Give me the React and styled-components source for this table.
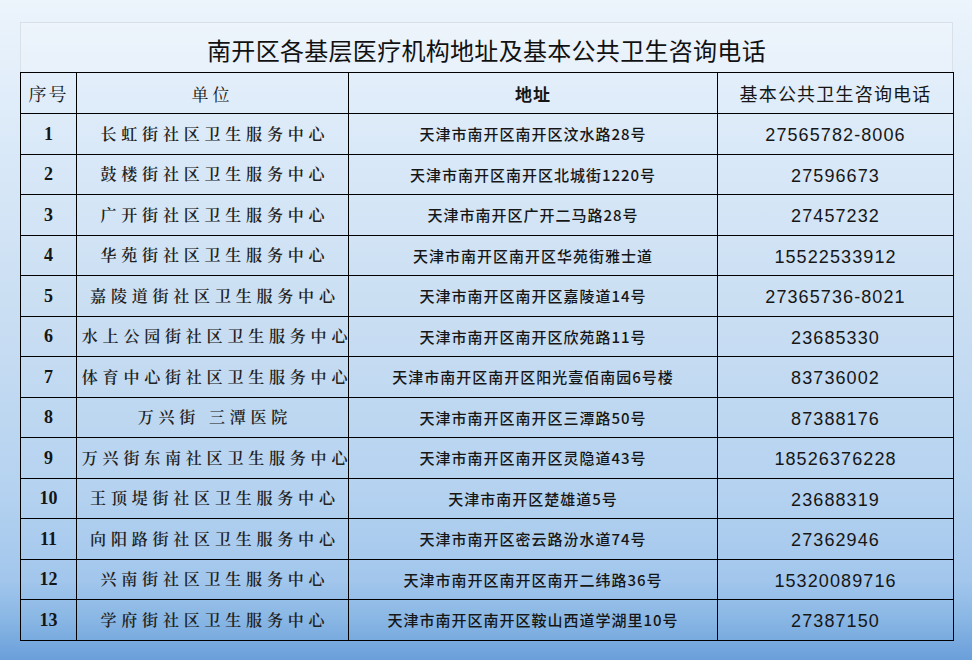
import React from "react";
import styled, { createGlobalStyle } from "styled-components";

const GlobalStyle = createGlobalStyle`
  html, body {
    margin: 0;
    padding: 0;
  }
  body {
    width: 972px;
    height: 660px;
    overflow: hidden;
    background: linear-gradient(
      to bottom,
      #ecf4fc 0%,
      #dae9f8 22%,
      #c8ddf2 50%,
      #b4d2f0 75%,
      #a2c6ec 88%,
      #88b6e4 94%,
      #6a9fda 100%
    );
    font-family: "Noto Sans CJK SC", "Liberation Sans", sans-serif;
    color: #111;
  }
`;

const Page = styled.div`
  box-sizing: border-box;
  width: 972px;
  height: 660px;
  padding: 22px 19px 0 20px;
`;

const TitleBox = styled.div`
  box-sizing: border-box;
  height: 50px;
  display: flex;
  align-items: center;
  justify-content: center;
  border: 1px solid #d9e0e8;
  border-bottom: none;
  background: rgba(255, 255, 255, 0.18);
  font-size: 24px;
  line-height: 1;
  font-weight: 400;
  letter-spacing: 0.3px;
  color: #111;
  padding-top: 4px;
`;

const Table = styled.table`
  width: 933px;
  border-collapse: collapse;
  table-layout: fixed;
`;

const HeadCell = styled.th`
  box-sizing: border-box;
  height: 41px;
  padding: 0;
  line-height: 1;
  border: 1px solid #000;
  font-weight: ${({ $weight }) => $weight || 400};
  font-family: ${({ $serif }) =>
    $serif
      ? `"Noto Serif CJK SC", "Noto Serif CJK", "Noto Sans CJK SC", serif`
      : `"Noto Sans CJK SC", sans-serif`};
  font-size: ${({ $size }) => $size || "17px"};
  letter-spacing: ${({ $spacing }) => $spacing || "1px"};
  color: #151515;
  text-align: center;
`;

const Cell = styled.td`
  box-sizing: border-box;
  height: 40.5px;
  padding: 0;
  line-height: 1;
  border: 1px solid #000;
  text-align: center;
  white-space: nowrap;
  overflow: visible;
`;

const NumCell = styled(Cell)`
  font-family: "Liberation Serif", "Times New Roman", serif;
  font-weight: 700;
  font-size: 18px;
  color: #151515;
`;

const UnitCell = styled(Cell)`
  font-family: "Noto Serif CJK SC", "Noto Serif CJK", "Noto Sans CJK SC", serif;
  font-weight: 600;
  font-size: 16px;
  letter-spacing: 4.8px;
  color: #222;
  padding-left: 4.8px;
`;

const AddrCell = styled(Cell)`
  font-family: "Noto Sans CJK SC", sans-serif;
  font-weight: 500;
  font-size: 15px;
  letter-spacing: 1px;
  color: #161616;
`;

const PhoneCell = styled(Cell)`
  font-family: "Liberation Sans", Arial, sans-serif;
  font-size: 18px;
  letter-spacing: 1.1px;
  color: #161616;
  padding-top: 3px;
`;

const rows = [
  ["1", "长虹街社区卫生服务中心", "天津市南开区南开区汶水路28号", "27565782-8006"],
  ["2", "鼓楼街社区卫生服务中心", "天津市南开区南开区北城街1220号", "27596673"],
  ["3", "广开街社区卫生服务中心", "天津市南开区广开二马路28号", "27457232"],
  ["4", "华苑街社区卫生服务中心", "天津市南开区南开区华苑街雅士道", "15522533912"],
  ["5", "嘉陵道街社区卫生服务中心", "天津市南开区南开区嘉陵道14号", "27365736-8021"],
  ["6", "水上公园街社区卫生服务中心", "天津市南开区南开区欣苑路11号", "23685330"],
  ["7", "体育中心街社区卫生服务中心", "天津市南开区南开区阳光壹佰南园6号楼", "83736002"],
  ["8", "万兴街 三潭医院", "天津市南开区南开区三潭路50号", "87388176"],
  ["9", "万兴街东南社区卫生服务中心", "天津市南开区南开区灵隐道43号", "18526376228"],
  ["10", "王顶堤街社区卫生服务中心", "天津市南开区楚雄道5号", "23688319"],
  ["11", "向阳路街社区卫生服务中心", "天津市南开区密云路汾水道74号", "27362946"],
  ["12", "兴南街社区卫生服务中心", "天津市南开区南开区南开二纬路36号", "15320089716"],
  ["13", "学府街社区卫生服务中心", "天津市南开区南开区鞍山西道学湖里10号", "27387150"],
];

export default function App() {
  return (
    <>
      <GlobalStyle />
      <Page>
        <TitleBox>南开区各基层医疗机构地址及基本公共卫生咨询电话</TitleBox>
        <Table>
          <colgroup>
            <col style={{ width: "56px" }} />
            <col style={{ width: "272px" }} />
            <col style={{ width: "369px" }} />
            <col style={{ width: "236px" }} />
          </colgroup>
          <thead>
            <tr>
              <HeadCell $serif $size="18px" $spacing="2px">
                序号
              </HeadCell>
              <HeadCell $serif $size="17px" $spacing="4px">
                单位
              </HeadCell>
              <HeadCell $size="17px" $spacing="1px" $weight={700}>
                地址
              </HeadCell>
              <HeadCell $size="18px" $spacing="1.2px">
                基本公共卫生咨询电话
              </HeadCell>
            </tr>
          </thead>
          <tbody>
            {rows.map(([no, unit, addr, phone]) => (
              <tr key={no}>
                <NumCell>{no}</NumCell>
                <UnitCell>{unit}</UnitCell>
                <AddrCell>{addr}</AddrCell>
                <PhoneCell>{phone}</PhoneCell>
              </tr>
            ))}
          </tbody>
        </Table>
      </Page>
    </>
  );
}
